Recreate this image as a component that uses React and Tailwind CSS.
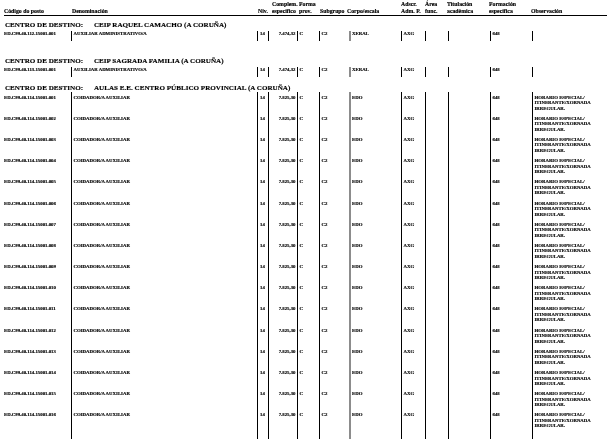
import React from "react";

const OBS = ["HORARIO ESPECIAL/", "ITINERANTE/XORNADA", "IRREGULAR."];

function Row({ code, den, comp, corpo, obs, tall }) {
  const pt = tall ? "pt-[2.6px]" : "pt-0";
  return (
    <div className={`flex ${tall ? "h-[21.2px]" : "h-[10px]"}`}>
      <div className={`w-[67px] shrink-0 ${pt}`}>{code}</div>
      <div className={`w-[186px] shrink-0 border-l border-black pl-[1.5px] ${pt}`}>{den}</div>
      <div className={`w-[11px] shrink-0 border-l border-black pl-[2px] ${pt}`}>14</div>
      <div className={`w-[29px] shrink-0 border-l border-black pr-[1.5px] text-right ${pt}`}>{comp}</div>
      <div className={`w-[22px] shrink-0 border-l border-black pl-[1.5px] ${pt}`}>C</div>
      <div className={`w-[30px] shrink-0 border-l border-black pl-[1.5px] ${pt}`}>C2</div>
      <div className={`w-[52px] shrink-0 border-l-2 border-[#8c8c8c] pl-[1px] ${pt}`}>{corpo}</div>
      <div className={`w-[24px] shrink-0 border-l border-black pl-[1.5px] ${pt}`}>AXG</div>
      <div className={`w-[23px] shrink-0 border-l border-black ${pt}`}></div>
      <div className={`w-[42px] shrink-0 border-l border-black ${pt}`}></div>
      <div className={`w-[42px] shrink-0 border-l border-black pl-[1.5px] ${pt}`}>648</div>
      <div className={`w-[75px] shrink-0 border-l border-black pl-[1.5px] ${pt}`}>
        {obs ? OBS.map((l) => <div key={l} className="whitespace-nowrap">{l}</div>) : null}
      </div>
    </div>
  );
}

function Filler() {
  return (
    <div className="flex flex-1">
      <div className="w-[67px] shrink-0"></div>
      <div className="w-[186px] shrink-0 border-l border-black"></div>
      <div className="w-[11px] shrink-0 border-l border-black"></div>
      <div className="w-[29px] shrink-0 border-l border-black"></div>
      <div className="w-[22px] shrink-0 border-l border-black"></div>
      <div className="w-[30px] shrink-0 border-l border-black"></div>
      <div className="w-[52px] shrink-0 border-l-2 border-[#8c8c8c]"></div>
      <div className="w-[24px] shrink-0 border-l border-black"></div>
      <div className="w-[23px] shrink-0 border-l border-black"></div>
      <div className="w-[42px] shrink-0 border-l border-black"></div>
      <div className="w-[42px] shrink-0 border-l border-black"></div>
      <div className="w-[75px] shrink-0 border-l border-black"></div>
    </div>
  );
}

function Heading({ name, className }) {
  return (
    <div className={`flex h-[8px] pl-[1px] text-[7.1px] leading-[8px] font-bold whitespace-nowrap ${className}`}>
      <span className="w-[89px] shrink-0">CENTRO DE DESTINO:</span>
      <span>{name}</span>
    </div>
  );
}

function H({ w, l1, l2, cls = "" }) {
  return (
    <div className={`${w} shrink-0 whitespace-nowrap -mb-[0.5px] ${cls}`}>
      <div className="h-[7.5px]">{l1}</div>
      <div className="h-[7.5px]">{l2}</div>
    </div>
  );
}

export default function App() {
  const codes3 = Array.from({ length: 16 }, (_, i) => String(i + 1).padStart(3, "0"));
  return (
    <div className="w-[616px] h-[439px] overflow-hidden bg-white text-black font-['Liberation_Serif',serif] will-change-transform [-webkit-text-stroke:0.15px_black]">
      <div className="w-[603px] ml-[4px] h-[439px] flex flex-col">
        <div className="flex items-end h-[16px] shrink-0 border-b border-black text-[5.8px] leading-[7.5px] font-bold">
          <H w="w-[67px]" l1="" l2="Código do posto" />
          <H w="w-[186px]" l1="" l2="Denominación" cls="pl-[1px]" />
          <H w="w-[11px]" l1="" l2="Niv." cls="pl-[1px]" />
          <H w="w-[29px]" l1="Complem." l2="específico" cls="pl-[4px]" />
          <H w="w-[22px]" l1="Forma" l2="prov." cls="pl-[2px]" />
          <H w="w-[30px]" l1="" l2="Subgrupo" cls="pl-[1px]" />
          <H w="w-[52px]" l1="" l2="Corpo/escala" cls="-ml-[2px] pl-0" />
          <H w="w-[24px]" l1="Adscr." l2="Adm. P." cls="pl-[2px]" />
          <H w="w-[23px]" l1="Área" l2="func." cls="pl-[2px]" />
          <H w="w-[42px]" l1="Titulación" l2="académica" cls="pl-[1px]" />
          <H w="w-[42px]" l1="Formación" l2="específica" cls="pl-[1px]" />
          <H w="w-[75px]" l1="" l2="Observación" cls="pl-[1px]" />
        </div>

        <div className="text-[4.8px] leading-[5.5px] font-bold flex flex-col flex-1">
          <Heading name="CEIP RAQUEL CAMACHO (A CORUÑA)" className="mt-[5px]" />
          <div className="mt-[2px]">
            <Row code="ED.C99.40.112.15001.001" den="AUXILIAR ADMINISTRATIVO/A" comp="7.474,32" corpo="XERAL" />
          </div>
          <Heading name="CEIP SAGRADA FAMILIA (A CORUÑA)" className="mt-[16px]" />
          <div className="mt-[2px]">
            <Row code="ED.C99.40.113.15001.001" den="AUXILIAR ADMINISTRATIVO/A" comp="7.474,32" corpo="XERAL" />
          </div>
          <Heading name="AULAS E.E. CENTRO PÚBLICO PROVINCIAL (A CORUÑA)" className="mt-[7px]" />
          <div className="flex flex-col flex-1">
            {codes3.map((c) => (
              <Row
                key={c}
                tall
                obs
                code={`ED.C99.40.114.15001.${c}`}
                den="COIDADOR/A AUXILIAR"
                comp="7.825,30"
                corpo="EDO"
              />
            ))}
            <Filler />
          </div>
        </div>
      </div>
    </div>
  );
}
